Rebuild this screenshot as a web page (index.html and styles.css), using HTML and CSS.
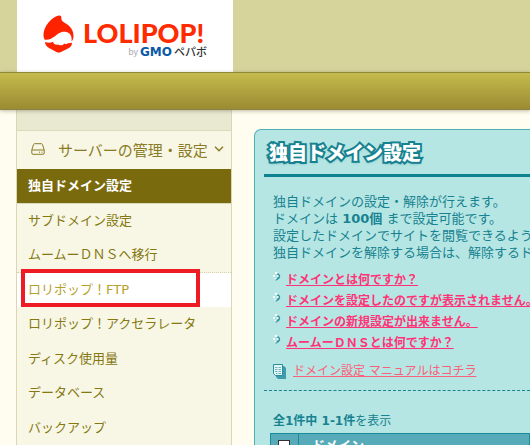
FILE: index.html
```html
<!DOCTYPE html>
<html lang="ja">
<head>
    <meta charset="UTF-8">
    <meta name="viewport" content="width=device-width, initial-scale=1.0">
    <title>独自ドメイン設定</title>
    <link rel="stylesheet" href="styles.css">
</head>
<body>
    <header class="header">
        <a class="logo" href="#">
            <svg class="logo-mark" viewBox="0 0 31 38" width="31" height="38">
                <path fill="#ff2200" d="M16 .5C17.500 .2 18.300 1 18.300 2.500C18.300 5 19 6.500 22 8C27.500 11 30.500 15.500 30.500 21C30.500 23.500 29.800 25.500 28.500 26.300C29.300 21 27 17 22 16.700C17 16.300 15 19 11.500 21.500C8 24 4.500 25.500 1.500 24.500C.3 22 .2 19 1 16C3 9 9 2 16 .5Z"/>
                <path fill="#ff2200" d="M2 27C5 28 8 27.800 10 26.800C10.500 29 13 30.500 15.500 29.500C17 31 20 30.500 21.300 28.500C22.500 29.300 24 29.300 25 28.300L29 27.800C29 31 27.500 32 25 33.500L18 37C16.500 37.700 15 37.700 13.500 37L6 33C3.500 31.500 2.300 30 2 27Z"/>
            </svg>
            <span class="logo-text">
                <span class="logo-name">LOLIPOP!</span>
                <span class="logo-by">by <b>GMO</b><span class="pepabo">ペパボ</span></span>
            </span>
        </a>
    </header>
    <div class="nav-bar"></div>

    <div class="container">
        <nav class="sidebar">
            <button class="menu-title" type="button">
                <svg viewBox="0 0 14 12" width="14" height="12" fill="none" stroke="currentColor">
                    <path d="M.8 7L2.500 1.500Q2.800 .7 3.700 .7H10.300Q11.200 .7 11.500 1.500L13.200 7V10Q13.200 11.300 12 11.300H2Q.8 11.300 .8 10ZM1 7H13"/>
                    <path d="M8 9.200H9M10.500 9.200H11.500"/>
                </svg>
                <span>サーバーの管理・設定</span>
                <svg class="arrow" viewBox="0 0 10 6" width="10" height="6" fill="none" stroke="currentColor" stroke-width="1.500">
                    <path d="M1 .8L5 4.800L9 .8"/>
                </svg>
            </button>
            <ul class="menu">
                <li class="active"><a href="#">独自ドメイン設定</a></li>
                <li><a href="#">サブドメイン設定</a></li>
                <li class="dotted"><a href="#">ムームーＤＮＳへ移行</a></li>
                <li class="marked"><a href="#">ロリポップ！FTP</a></li>
                <li><a href="#">ロリポップ！アクセラレータ</a></li>
                <li><a href="#">ディスク使用量</a></li>
                <li><a href="#">データベース</a></li>
                <li><a href="#">バックアップ</a></li>
            </ul>
        </nav>

        <main class="panel">
            <h1>独自ドメイン設定</h1>
            <div class="intro">
                <p>
                    独自ドメインの設定・解除が行えます。<br>
                    ドメインは <b>100個</b> まで設定可能です。<br>
                    設定したドメインでサイトを閲覧できるよう<br>
                    独自ドメインを解除する場合は、解除するド
                </p>
                <svg width="0" height="0" class="defs">
                    <symbol id="bullet" viewBox="0 0 8 9">
                        <path fill="none" stroke="#3594a2" stroke-width="2" d="M4 1.500Q7.500 3.500 5.500 6L2.500 8"/>
                        <path fill="#f2fcfb" d="M2 0H4.500V2H2ZM0 3H2V5H0ZM4 3H5.500V5H4ZM1.500 6H3.500V7.500H1.500Z"/>
                    </symbol>
                </svg>
                <ul class="faq">
                    <li><svg width="8" height="9"><use href="#bullet"/></svg><a href="#">ドメインとは何ですか？</a></li>
                    <li><svg width="8" height="9"><use href="#bullet"/></svg><a href="#">ドメインを設定したのですが表示されません。</a></li>
                    <li><svg width="8" height="9"><use href="#bullet"/></svg><a href="#">ドメインの新規設定が出来ません。</a></li>
                    <li><svg width="8" height="9"><use href="#bullet"/></svg><a href="#">ムームーＤＮＳとは何ですか？</a></li>
                </ul>
                <div class="manual">
                    <svg viewBox="0 0 13 15" width="13" height="15">
                        <path fill="#3f9cab" d="M3 2H11L13 4V15H5L3 13Z"/>
                        <path fill="#e2f6f5" stroke="#2c8c9c" d="M.5 .5H9.500V11.500H2.500L.5 9.500Z"/>
                        <path stroke="#6db5c0" d="M2 3.500H4.500M5.500 3.500H8M2 5.500H4.500M5.500 5.500H8M2 7.500H4.500M5.500 7.500H8M3 9.500H4.500M5.500 9.500H8"/>
                    </svg>
                    <a href="#">ドメイン設定 マニュアルはコチラ</a>
                </div>
            </div>
            <div class="count"><b>全1件中 1-1件</b>を表示</div>
            <table>
                <thead>
                    <tr>
                        <th class="check"><input type="checkbox" aria-label="すべて選択"></th>
                        <th>ドメイン</th>
                    </tr>
                </thead>
            </table>
        </main>
    </div>
</body>
</html>
```
FILE: styles.css
```css
* {
    box-sizing: border-box;
}
body {
    margin: 0;
    height: 100vh;
    overflow: hidden;
    display: flex;
    flex-direction: column;
    background-color: #fffdf0;
    font-family: 'DejaVu Sans', 'Noto Sans CJK JP', sans-serif;
    font-size: 13px;
}
ul {
    list-style: none;
    margin: 0;
    padding: 0;
}

/* header */
.header {
    flex: none;
    height: 72px;
    padding-left: 17px;
    background-color: #d6d39b;
}
.logo {
    display: flex;
    width: 216px;
    height: 72px;
    padding: 15px 0 0 26px;
    gap: 9px;
    background-color: #fff;
    text-decoration: none;
}
.logo-mark {
    flex: none;
}
.logo-text {
    display: flex;
    flex-direction: column;
    width: 124px;
    padding-top: 5px;
}
.logo-name {
    font-family: Lato, sans-serif;
    font-weight: 900;
    font-size: 27px;
    line-height: 26px;
    color: #ff2a00;
}
.logo-by {
    display: flex;
    justify-content: flex-end;
    align-items: center;
    gap: 2px;
    font-family: 'Liberation Sans', 'Noto Sans CJK JP', sans-serif;
    font-size: 9px;
    line-height: 13px;
    color: #a8a8b0;
}
.logo-by b {
    font-family: 'DejaVu Sans', sans-serif;
    font-size: 12px;
    color: #0a5aa8;
}
.pepabo {
    font-size: 11px;
    font-weight: 500;
    color: #333;
}
.nav-bar {
    flex: none;
    position: relative;
    height: 38px;
    border-top: 1px solid #918a3c;
    border-bottom: 1px solid #8d8148;
    background: linear-gradient(#c5bb4d, #9b8b32);
    box-shadow: 0 1px 4px rgba(90, 80, 40, 0.4);
}

/* sidebar */
.container {
    display: flex;
    flex: 1;
    gap: 22px;
    padding-left: 16px;
}
.sidebar {
    flex: none;
    width: 216px;
    padding-top: 20px;
    border: 1px solid #d9d7b5;
    border-width: 0 1px;
    background: linear-gradient(#e9e9d2, #e9e9d2) no-repeat;
    background-size: 100% 20px;
    background-color: #f8f7e6;
}
.menu-title {
    display: flex;
    align-items: center;
    width: 100%;
    height: 39px;
    padding: 0 7px 2px 14px;
    border: 0;
    border-top: 1px solid #dcdabc;
    background: none;
    font-family: inherit;
    font-size: 15px;
    color: #8a7c26;
}
.menu-title span {
    margin-left: 13px;
    white-space: nowrap;
}
.arrow {
    margin-left: auto;
}
.menu li {
    position: relative;
    height: 34px;
}
.menu li:nth-child(odd) {
    height: 35px;
    border-bottom: 1px solid transparent;
}
.menu a {
    display: block;
    padding-left: 11px;
    line-height: 34px;
    color: #857712;
    text-decoration: none;
    white-space: nowrap;
}
.menu .active a {
    background-color: #7a6a0e;
    color: #fff;
    font-weight: bold;
}
.menu li.active {
    border-bottom-color: #dcdabc;
}
.menu li.dotted {
    border-bottom: 1px dotted #d5d2ac;
}
.menu .marked a {
    background-color: #fff;
    color: #b5a22c;
}
.menu .marked::after {
    content: "";
    position: absolute;
    left: 4px;
    top: -4px;
    box-sizing: border-box;
    width: 179px;
    height: 38px;
    border: 4px solid #ed1c24;
}

/* main panel */
.panel {
    flex: 1;
    min-width: 0;
    margin-top: 19px;
    padding: 9px 0 0 9px;
    overflow: hidden;
    border: 1px solid #4fafb5;
    border-width: 1px 0 0 1px;
    border-top-left-radius: 7px;
    background-color: #b6e6e3;
    color: #178291;
    white-space: nowrap;
}
h1 {
    margin: 0;
    padding: 0 0 9px 5px;
    border-bottom: 3px solid #0f8291;
    font-family: 'Noto Sans CJK JP', sans-serif;
    font-size: 19px;
    font-weight: 900;
    line-height: 26px;
    color: #fff;
    -webkit-text-stroke: 4px #178291;
    paint-order: stroke fill;
    text-shadow: 0 2px 3px rgba(23, 130, 145, 0.5);
}
.intro {
    padding: 16px 0 10px 9px;
    border-bottom: 1px dashed #178291;
}
.intro p {
    margin: 0;
    line-height: 17px;
}
.defs {
    display: block;
}
.faq {
    margin-top: 9px;
    font-size: 12px;
}
.faq li {
    display: flex;
    gap: 5px;
    line-height: 21px;
}
.faq svg {
    flex: none;
    margin-top: 2px;
}
.faq a {
    font-weight: bold;
    color: #ff3377;
}
.manual {
    display: flex;
    align-items: center;
    gap: 7px;
    margin-top: 8px;
    font-size: 12px;
    line-height: 18px;
}
.manual a {
    color: #fa6078;
}
.count {
    padding: 20px 0 2px 9px;
    font-size: 12px;
    line-height: 20px;
}
table {
    width: calc(100% - 6px);
    margin-left: 6px;
    border-collapse: collapse;
}
th {
    height: 24px;
    padding: 0 13px;
    border: 1px solid #178c9b;
    background-color: #57abb9;
    color: #fff;
    text-align: left;
    line-height: 18px;
}
th.check {
    width: 28px;
    padding: 0 7px;
}
th input {
    display: block;
    appearance: none;
    width: 12px;
    height: 12px;
    margin: 0;
    border: 1px solid #333;
    background-color: #fff;
}
```
